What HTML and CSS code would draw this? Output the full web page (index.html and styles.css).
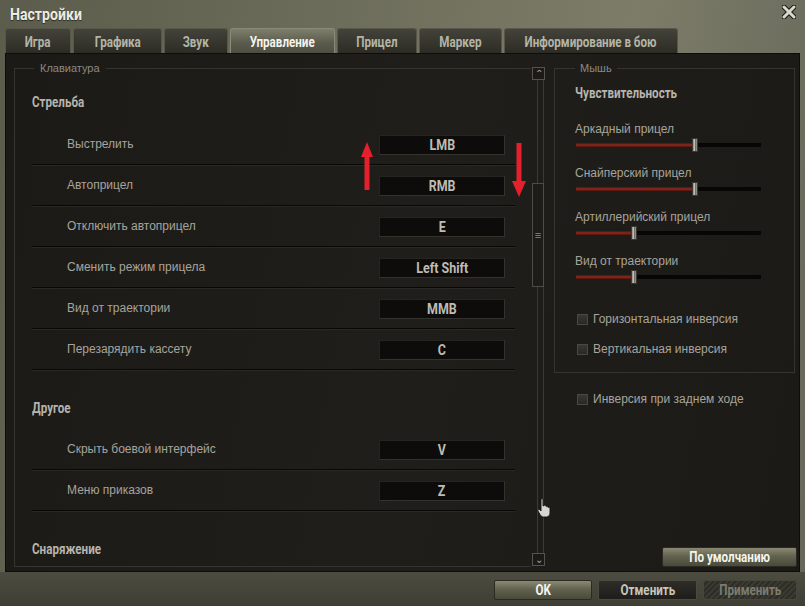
FILE: index.html
```html
<!DOCTYPE html>
<html lang="ru">
<head>
  <meta charset="UTF-8">
  <title>Настройки</title>
  <link rel="stylesheet" href="styles.css">
</head>
<body>
  <div class="window">
    <header class="titlebar">
      <span class="title cond">Настройки</span>
      <svg class="close" width="14" height="14" viewBox="0 0 14 14">
        <path d="M2 2 L12 12 M12 2 L2 12" stroke="#1a1a16" stroke-width="5" stroke-linecap="round"/>
        <path d="M2 2 L12 12 M12 2 L2 12" stroke="#d8d8ce" stroke-width="3" stroke-linecap="round"/>
      </svg>
    </header>

    <nav class="tabs">
      <div class="tab w1"><span class="cond">Игра</span></div>
      <div class="tab w2"><span class="cond">Графика</span></div>
      <div class="tab w3"><span class="cond">Звук</span></div>
      <div class="tab w4 active"><span class="cond">Управление</span></div>
      <div class="tab w5"><span class="cond">Прицел</span></div>
      <div class="tab w6"><span class="cond">Маркер</span></div>
      <div class="tab w7"><span class="cond">Информирование в бою</span></div>
    </nav>

    <main class="content">
      <div class="kb">
        <fieldset class="panel keyboard">
          <legend>Клавиатура</legend>
          <div class="section first"><span class="cond">Стрельба</span></div>
          <div class="row"><span>Выстрелить</span><span class="key"><span class="cond">LMB</span></span></div>
          <div class="row"><span>Автоприцел</span><span class="key"><span class="cond">RMB</span></span></div>
          <div class="row"><span>Отключить автоприцел</span><span class="key"><span class="cond">E</span></span></div>
          <div class="row"><span>Сменить режим прицела</span><span class="key"><span class="cond">Left Shift</span></span></div>
          <div class="row"><span>Вид от траектории</span><span class="key"><span class="cond">MMB</span></span></div>
          <div class="row"><span>Перезарядить кассету</span><span class="key"><span class="cond">C</span></span></div>
          <div class="section"><span class="cond">Другое</span></div>
          <div class="row"><span>Скрыть боевой интерфейс</span><span class="key"><span class="cond">V</span></span></div>
          <div class="row"><span>Меню приказов</span><span class="key"><span class="cond">Z</span></span></div>
          <div class="section"><span class="cond">Снаряжение</span></div>
        </fieldset>
        <div class="scrollbar">
          <div class="sb-btn">&#8963;</div>
          <div class="sb-track">
            <div class="sb-thumb">&#8801;</div>
          </div>
          <div class="sb-btn">&#8964;</div>
        </div>
      </div>

      <div class="side">
        <fieldset class="panel mouse">
          <legend>Мышь</legend>
          <div class="heading"><span class="cond">Чувствительность</span></div>
          <div class="slider-group">
            <div class="slider-label">Аркадный прицел</div>
            <div class="slider"><div class="fill" style="width:116px"></div><span class="thumb"></span></div>
          </div>
          <div class="slider-group">
            <div class="slider-label">Снайперский прицел</div>
            <div class="slider"><div class="fill" style="width:116px"></div><span class="thumb"></span></div>
          </div>
          <div class="slider-group">
            <div class="slider-label">Артиллерийский прицел</div>
            <div class="slider"><div class="fill" style="width:55px"></div><span class="thumb"></span></div>
          </div>
          <div class="slider-group">
            <div class="slider-label">Вид от траектории</div>
            <div class="slider"><div class="fill" style="width:55px"></div><span class="thumb"></span></div>
          </div>
          <label class="check first-check"><span class="box"></span>Горизонтальная инверсия</label>
          <label class="check"><span class="box"></span>Вертикальная инверсия</label>
        </fieldset>
        <label class="check reverse"><span class="box"></span>Инверсия при заднем ходе</label>
        <button class="btn btn-main default"><span class="cond">По умолчанию</span></button>
      </div>
    </main>

    <footer class="footer">
      <button class="btn btn-main ok"><span class="cond">OK</span></button>
      <button class="btn btn-dark cancel"><span class="cond">Отменить</span></button>
      <button class="btn btn-off apply"><span class="cond">Применить</span></button>
    </footer>

    <!-- red marks drawn over the screenshot -->
    <svg class="arrow arrow-up" width="12" height="48" viewBox="0 0 12 48">
      <polygon points="6,0 12,15 8.5,15 8.5,48 3.5,48 3.5,15 0,15" fill="#e3202b"/>
    </svg>
    <svg class="arrow arrow-down" width="14" height="54" viewBox="0 0 14 54">
      <polygon points="4.5,0 9.5,0 9.5,38 14,38 7,54 0,38 4.5,38" fill="#e3202b"/>
    </svg>
    <svg class="cursor" width="14" height="20" viewBox="0 0 14 20">
      <path d="M4 1.5 C4 0.5 6 0.5 6 1.5 L6 8 L7 7.5 C7.5 7 9 7 9 8 L9 8.5 C9.5 8 11 8 11 9 L11 9.5 C11.5 9 13 9 13 10 L13 15 C13 17 11.5 19 9.5 19 L6.5 19 C5 19 4 18 3 16.5 L1 13 C0.5 12 1.5 11 2.5 11.5 L4 13 Z" fill="#d8d6ce" stroke="#111" stroke-width="0.9"/>
    </svg>
  </div>
</body>
</html>
```

FILE: styles.css
```css
body {
  margin: 0;
  padding: 0;
  background-color: #1a1a16;
  font-family: "Liberation Sans", Arial, sans-serif;
}

/* bold condensed game font, approximated */
.cond {
  display: inline-block;
  font-family: Roboto, "Liberation Sans", sans-serif;
  font-weight: bold;
  transform: scaleX(0.83);
  white-space: nowrap;
}

.window {
  position: relative;
  width: 805px;
  height: 606px;
  display: flex;
  flex-direction: column;
  background: linear-gradient(100deg, #5c5c4c 0%, #6e6e5c 40%, #7c7c68 70%, #66665a 100%);
  overflow: hidden;
}

/* Title bar */
.titlebar {
  height: 28px;
  display: flex;
  align-items: center;
  justify-content: space-between;
  padding: 0 9px 0 10px;
  box-sizing: border-box;
}

.title {
  font-size: 17px;
  color: #ecece2;
  text-shadow: 0 1px 1px #2a2a22;
  transform-origin: left center;
}

.close {
  margin-top: -4px;
}

/* Tabs */
.tabs {
  height: 25px;
  display: flex;
  gap: 2px;
  padding-left: 5px;
}

.tab {
  box-sizing: border-box;
  height: 25px;
  display: flex;
  align-items: center;
  justify-content: center;
  padding-top: 2px;
  border: 1px solid #56564a;
  border-bottom: none;
  border-radius: 3px 3px 0 0;
  background: linear-gradient(#43433a, #2c2c25);
  font-size: 14px;
  color: #b4b4a6;
}

.tab.active {
  border-color: #8a8a78;
  background: linear-gradient(#7e7e6c, #5a5a4c 60%, #4e4e42);
  color: #f4f4ec;
}

.w1 { width: 66px; }
.w2 { width: 89px; }
.w3 { width: 64px; }
.w4 { width: 105px; }
.w5 { width: 80px; }
.w6 { width: 83px; }
.w7 { width: 174px; }

/* Main content */
.content {
  height: 519px;
  box-sizing: border-box;
  margin: 0 5px;
  border: 1px solid #0e0d0b;
  background: linear-gradient(100deg, #1c1a17, #201e1b 50%, #1c1a17);
  display: grid;
  grid-template-columns: 532px 241px;
  column-gap: 8px;
  padding: 7px 4px 4px 8px;
}

.panel {
  margin: 0;
  min-width: 0;
  border: 1px solid #36342f;
  box-sizing: border-box;
}

.panel legend {
  font-size: 11px;
  line-height: 14px;
  color: #8c8a80;
}

.kb {
  display: flex;
  min-height: 0;
}

.keyboard {
  flex: 1;
  border-right: none;
  padding: 0 16px 0 17px;
  overflow: hidden;
}

.keyboard legend {
  margin-left: 2px;
  padding: 0 6px;
}

.section {
  padding: 30px 0 13px;
  font-size: 14px;
  line-height: 16px;
  color: #b6b4ac;
}

.section .cond,
.heading .cond {
  transform-origin: left center;
}

.section.first {
  padding-top: 19px;
  padding-bottom: 14px;
}

.row {
  height: 41px;
  box-sizing: border-box;
  display: flex;
  align-items: center;
  justify-content: space-between;
  padding: 0 10px 0 35px;
  border-bottom: 1px solid #080807;
  box-shadow: 0 1px 0 #2a2824;
  font-size: 12px;
  color: #a6a49c;
}

.key {
  width: 126px;
  height: 20px;
  box-sizing: border-box;
  margin-top: 2px;
  display: flex;
  align-items: center;
  justify-content: center;
  background: #0d0c0a;
  border: 1px solid #262420;
  border-right-color: #34322d;
  border-bottom-color: #34322d;
  font-size: 15px;
  color: #bebcb4;
}

/* Scrollbar */
.scrollbar {
  width: 15px;
  margin-top: 6px;
  margin-bottom: 1px;
  display: flex;
  flex-direction: column;
  align-items: flex-start;
}

.sb-btn {
  width: 13px;
  height: 13px;
  box-sizing: border-box;
  margin-left: 1px;
  border: 1px solid #55534c;
  background: #1c1a17;
  color: #a8a69e;
  font-size: 10px;
  line-height: 12px;
  text-align: center;
}

.sb-track {
  flex: 1;
  width: 15px;
  background: linear-gradient(to right, transparent 6px, #3c3a34 6px, #3c3a34 7px, transparent 7px, transparent 12px, #3c3a34 12px, #3c3a34 13px, transparent 13px);
}

.sb-thumb {
  width: 12px;
  height: 104px;
  box-sizing: border-box;
  margin: 103px 0 0 1px;
  border: 1px solid #4e4c46;
  background: #1e1c19;
  display: flex;
  align-items: center;
  justify-content: center;
  color: #8a8880;
  font-size: 11px;
}

/* Right column */
.side {
  display: flex;
  flex-direction: column;
  min-height: 0;
}

.mouse {
  padding: 10px 0 16px 20px;
}

.mouse legend {
  margin-left: 0;
  padding: 0 5px;
}

.heading {
  font-size: 14px;
  line-height: 16px;
  color: #b6b4ac;
  margin-bottom: 21px;
}

.slider-group {
  margin-top: 14px;
}

.heading + .slider-group {
  margin-top: 21px;
}

.slider-label {
  font-size: 12px;
  line-height: 14px;
  color: #a6a49c;
  margin-bottom: 2px;
}

.slider {
  width: 185px;
  height: 14px;
  margin-left: 1px;
  display: flex;
  align-items: center;
  background: linear-gradient(to bottom, transparent 5px, #060505 5px, #090807 9px, transparent 9px);
}

.fill {
  height: 4px;
  background: linear-gradient(#4e120e, #8c2a20 50%, #4e120e);
}

.thumb {
  width: 6px;
  height: 14px;
  box-sizing: border-box;
  border: 1px solid #3a3832;
  background: linear-gradient(to right, #8a8880, #c4c2b8 40%, #6e6c64 60%, #9a988e);
}

.check {
  display: flex;
  align-items: center;
  gap: 5px;
  font-size: 12px;
  line-height: 14px;
  color: #a6a49c;
}

.check + .check {
  margin-top: 16px;
}

.first-check {
  margin-top: 28px;
}

.box {
  width: 11px;
  height: 11px;
  box-sizing: border-box;
  margin-left: 2px;
  border: 1px solid #4a4842;
  background: linear-gradient(#3a3833, #2a2824);
}

.reverse {
  margin-top: 19px;
  padding-left: 21px;
}

/* Buttons */
.btn {
  height: 20px;
  box-sizing: border-box;
  padding: 0;
  font-size: 14px;
  border-radius: 2px;
  cursor: pointer;
}

.btn-main {
  border: 1px solid #2a2a22;
  background: linear-gradient(#8a8a74, #62624f 45%, #4a4a3c);
  color: #f4f4ec;
}

.btn-dark {
  border: 1px solid #4a4a40;
  background: linear-gradient(#2e2d28, #1e1d1a);
  color: #c8c6bc;
}

.btn-off {
  border: 1px solid #46463c;
  background: repeating-linear-gradient(-45deg, #3a3a32 0, #3a3a32 2px, #2e2e27 2px, #2e2e27 4px);
  color: #7c7b72;
}

.default {
  margin-top: auto;
  align-self: flex-end;
  width: 135px;
  margin-right: -2px;
}

.footer {
  height: 34px;
  box-sizing: border-box;
  display: flex;
  justify-content: flex-end;
  gap: 6px;
  padding: 8px 8px 0 0;
  background: linear-gradient(#4c4c40, #3e3e34);
}

.ok { width: 98px; }
.cancel { width: 99px; }
.apply { width: 94px; }

/* Overlay marks */
.arrow,
.cursor {
  position: absolute;
}

.arrow-up {
  left: 361px;
  top: 142px;
}

.arrow-down {
  left: 512px;
  top: 143px;
}

.cursor {
  left: 537px;
  top: 498px;
}
```
